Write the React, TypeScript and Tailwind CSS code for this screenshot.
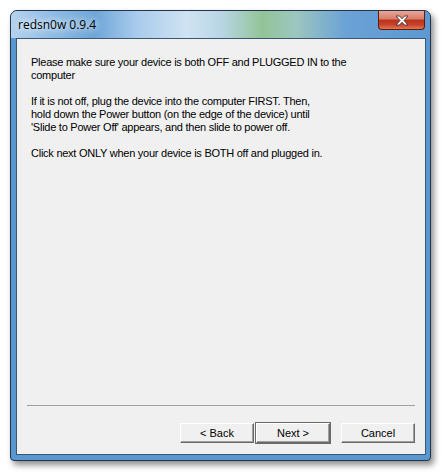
const body = "font-['Liberation_Sans',Arial,sans-serif]";

const CloseGlyph = () => (
  <svg width="16" height="11" viewBox="0 0 16 11">
    <path
      d="M2 1 L5.5 1 L8 3.8 L10.5 1 L14 1 L10 5.5 L14 10 L10.5 10 L8 7.2 L5.5 10 L2 10 L6 5.5 Z"
      fill="#ffffff"
      stroke="#4a3434"
      strokeWidth="0.9"
      strokeLinejoin="round"
    />
  </svg>
);

const WinButton = ({ label, isDefault }: { label: string; isDefault?: boolean }) => (
  <div className={isDefault ? "border border-[#6a6a6a]" : "border border-transparent"}>
    <div
      className={`flex h-[20px] w-[74px] items-center justify-center border border-t-white border-l-white border-r-[#696969] border-b-[#696969] bg-[#f0f0f0] text-[11px] text-[#000] shadow-[inset_-1px_-1px_0_#a0a0a0] ${body}`}
    >
      {label}
    </div>
  </div>
);

const App = () => {
  return (
    <div className="h-[473px] w-[443px] bg-white pl-[10px] pt-[10px]">
      <div className="relative flex h-[451px] w-[421px] flex-col rounded-t-[7px] rounded-b-[4px] border border-[#23354a] bg-[#5897d0] shadow-[3px_4px_6px_rgba(0,0,0,0.45)]">
        <div className="flex h-[27px] items-center rounded-t-[6px] bg-[linear-gradient(90deg,#b5d3ee_0%,#8fbce4_10%,#6ea6d8_20%,#a9cbec_30%,#cfe3f2_42%,#b9d6e6_50%,#93c497_60%,#9cc6c0_68%,#6ba2d6_80%,#5d98d1_100%)] pl-[7px]">
          <span className="text-[12px] text-black font-['Open_Sans',sans-serif] [text-shadow:0_0_6px_rgba(255,255,255,0.95),0_0_10px_rgba(255,255,255,0.8)]">
            redsn0w 0.9.4
          </span>
        </div>
        <div className="absolute left-[367px] top-0 flex h-[19px] w-[47px] items-center justify-center rounded-b-[4px] border border-t-0 border-[#5b1d12] bg-[linear-gradient(180deg,#e9a797_0%,#d77b67_45%,#b9321d_50%,#c74128_75%,#e2774f_100%)]">
          <CloseGlyph />
        </div>
        <div className="flex flex-1 px-[5px] pb-[5px] pr-[4px]">
          <div className="flex flex-1 flex-col border border-[#3b5873] bg-[#f0f0f0]">
            <div className={`pl-[14px] pt-[17px] text-[11px] leading-[13px] tracking-[-0.25px] text-black ${body}`}>
              <p className="whitespace-nowrap">
                Please make sure your device is both OFF and PLUGGED IN to the
                <br />
                computer
              </p>
              <p className="mt-[13px] whitespace-nowrap">
                If it is not off, plug the device into the computer FIRST. Then,
                <br />
                hold down the Power button (on the edge of the device) until
                <br />
                'Slide to Power Off' appears, and then slide to power off.
              </p>
              <p className="mt-[13px] whitespace-nowrap">
                Click next ONLY when your device is BOTH off and plugged in.
              </p>
            </div>
            <div className="flex-1" />
            <div className="mx-[10px] h-px bg-[#a0a0a0]" />
            <div className="mb-[10px] mr-[9px] mt-[16px] flex justify-end">
              <WinButton label="< Back" />
              <WinButton label="Next >" isDefault />
              <div className="w-[9px]" />
              <WinButton label="Cancel" />
            </div>
          </div>
        </div>
      </div>
    </div>
  );
};

export default App;
